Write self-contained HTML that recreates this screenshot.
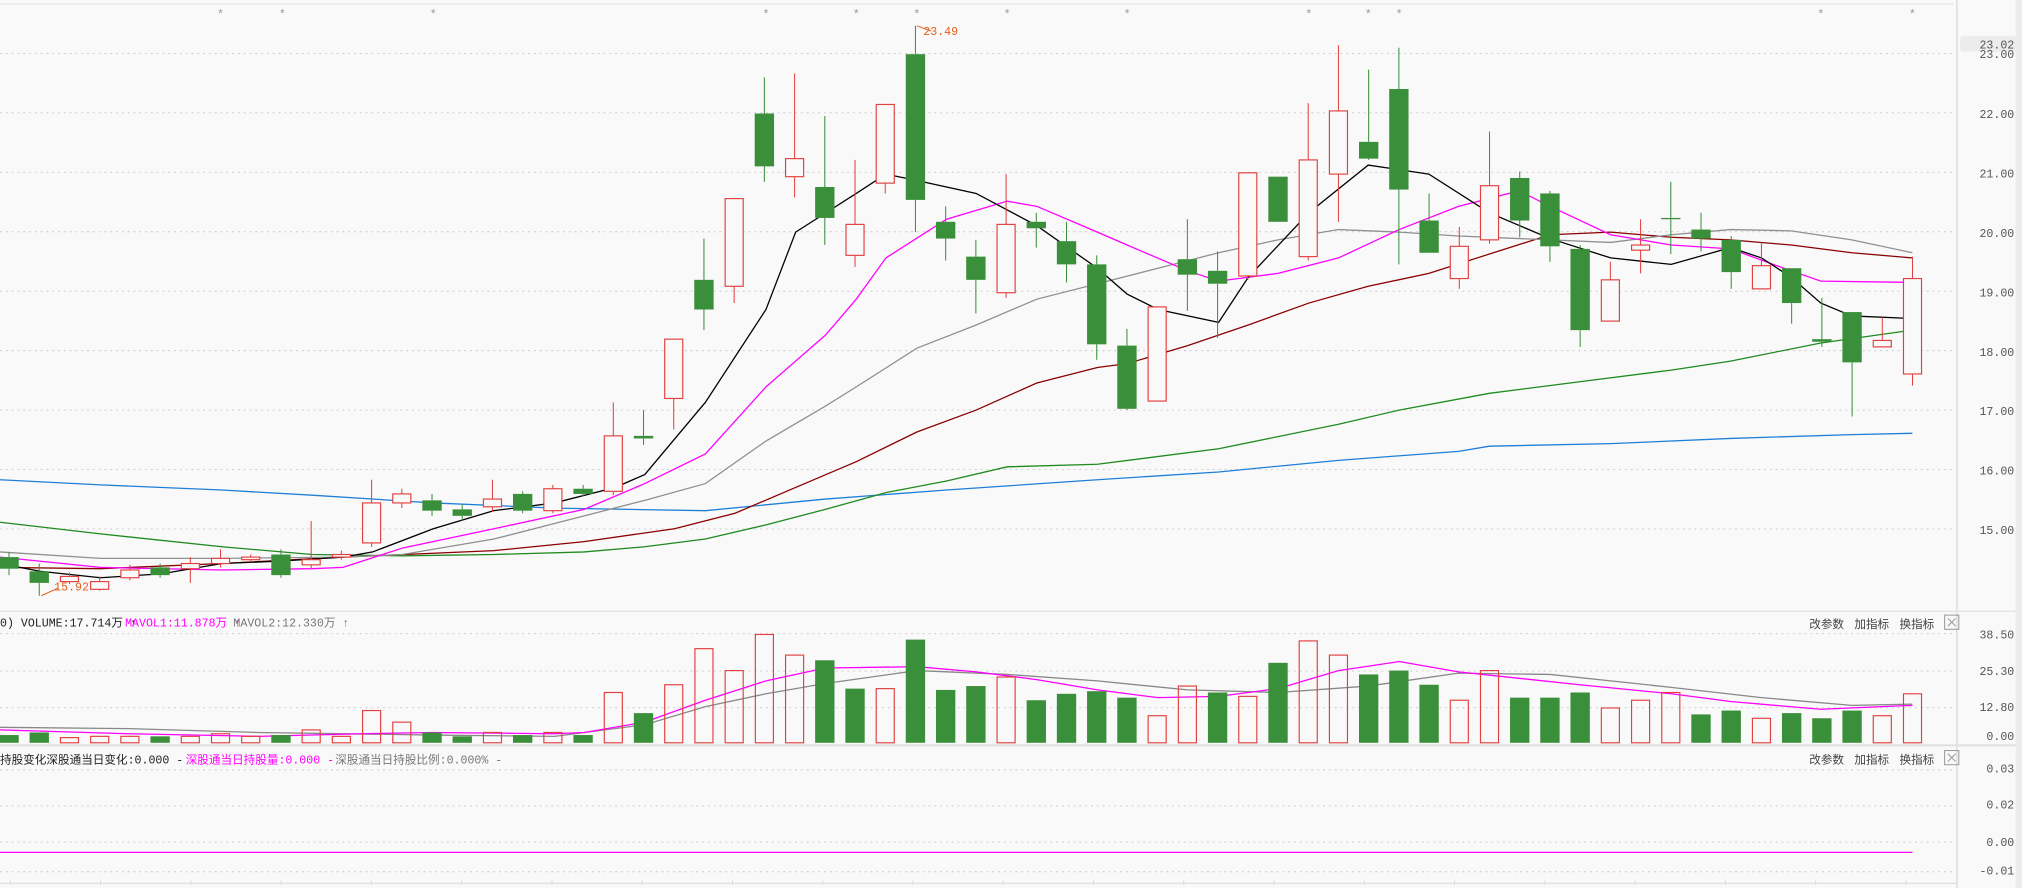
<!DOCTYPE html>
<html><head><meta charset="utf-8">
<style>
html,body{margin:0;padding:0;background:#f9f9f9;overflow:hidden}
svg{display:block}
text{font-family:"Liberation Mono","Noto Sans CJK SC",monospace;font-size:9px}
</style></head><body>
<svg id="s" width="2022" height="888" viewBox="0 0 1568 688.6" xmlns="http://www.w3.org/2000/svg">
<rect x="0" y="0" width="1568" height="689" fill="#f9f9f9"/>
<g id="grid"></g>
<g id="ma"></g>
<g id="cs"></g>
<line x1="0" y1="3" x2="1515" y2="3" stroke="#e6e6e6" stroke-width="1"/>
<line x1="1517.5" y1="0" x2="1517.5" y2="689" stroke="#d8d8d8" stroke-width="1"/>
<line x1="0" y1="474" x2="1568" y2="474" stroke="#e0e0e0" stroke-width="1"/>
<line x1="0" y1="578" x2="1568" y2="578" stroke="#e0e0e0" stroke-width="1.5"/>
<line x1="0" y1="685" x2="1517" y2="685" stroke="#e0e0e0" stroke-width="1"/>
<rect x="1563" y="0" width="5" height="689" fill="#ececec"/>
<g fill="#999" font-size="12" text-anchor="middle">
<text x="171" y="14">*</text><text x="219" y="14">*</text><text x="336" y="14">*</text><text x="594" y="14">*</text><text x="664" y="14">*</text><text x="711" y="14">*</text><text x="781" y="14">*</text><text x="874" y="14">*</text><text x="1015" y="14">*</text><text x="1061" y="14">*</text><text x="1085" y="14">*</text><text x="1412" y="14">*</text><text x="1483" y="14">*</text>
</g>
<rect x="1520" y="28" width="47" height="12" rx="2" fill="#ececec"/>
<g fill="#555" text-anchor="end">
<text x="1562" y="37.5">23.02</text>
<text x="1562" y="45">23.00</text>
<text x="1562" y="91.5">22.00</text>
<text x="1562" y="137.6">21.00</text>
<text x="1562" y="183.7">20.00</text>
<text x="1562" y="229.8">19.00</text>
<text x="1562" y="275.9">18.00</text>
<text x="1562" y="322">17.00</text>
<text x="1562" y="368.1">16.00</text>
<text x="1562" y="414.2">15.00</text>
<text x="1562" y="495">38.50</text>
<text x="1562" y="523.5">25.30</text>
<text x="1562" y="551.5">12.80</text>
<text x="1562" y="574">0.00</text>
<text x="1562" y="599">0.03</text>
<text x="1562" y="627">0.02</text>
<text x="1562" y="656">0.00</text>
<text x="1562" y="678">-0.01</text>
</g>
<text x="716" y="27" fill="#e0601a">23.49</text>
<line x1="711" y1="20" x2="722" y2="24" stroke="#e0601a" stroke-width="0.8"/>
<text x="42" y="458" fill="#e0601a">15.92</text>
<line x1="32" y1="462" x2="45" y2="456" stroke="#e0601a" stroke-width="0.8"/>
<text x="0" y="486" fill="#222">0) VOLUME:17.714万 ↑</text>
<text x="97" y="486" fill="#ff00ff">MAVOL1:11.878万 ↑</text>
<text x="181" y="486" fill="#777">MAVOL2:12.330万 ↑</text>
<g fill="#444" font-size="10">
<text x="1403" y="487">改参数</text><text x="1438" y="487">加指标</text><text x="1473" y="487">换指标</text>
<text x="1403" y="592">改参数</text><text x="1438" y="592">加指标</text><text x="1473" y="592">换指标</text>
</g>
<g stroke="#999" fill="none" stroke-width="0.8">
<rect x="1508" y="477" width="11" height="11"/><path d="M1510.5 479.5l6 6M1516.5 479.5l-6 6"/>
<rect x="1508" y="582" width="11" height="11"/><path d="M1510.5 584.5l6 6M1516.5 584.5l-6 6"/>
</g>
<text x="0" y="592" fill="#222">持股变化</text>
<text x="36" y="592" fill="#222">深股通当日变化:0.000 -</text>
<text x="144" y="592" fill="#ff00ff">深股通当日持股量:0.000 -</text>
<text x="260" y="592" fill="#777">深股通当日持股比例:0.000% -</text>
<line x1="0" y1="661" x2="1483" y2="661" stroke="#ff00ff" stroke-width="1"/>
</svg>
<script>
var NS="http://www.w3.org/2000/svg";
function el(p,t,a){var e=document.createElementNS(NS,t);for(var k in a)e.setAttribute(k,a[k]);document.getElementById(p).appendChild(e);return e;}
var R="#e24040",G="#3a8f3a";
[41.4,87.5,133.6,179.7,225.8,271.9,318,364.1,410.2,491.4,520.4,548.8,597,625,653,676].forEach(function(y){
 el("grid","line",{x1:0,x2:1515,y1:y,y2:y,stroke:"#c8c8c8","stroke-width":0.7,"stroke-dasharray":"1.5,3"});});
for(var i=0;i<22;i++){el("grid","line",{x1:i*70+8,x2:i*70+8,y1:683,y2:686,stroke:"#ccc","stroke-width":0.7});}
var C=[["g",432,441,428,446],["g",443,452,437,462],["r",447,451,444,453],["r",451,457,447,458],["r",442,448,438,450],["g",440,446,437,448],["r",437,441,432,452],["r",433,437,426,440],["r",432,434,430,436],["g",430,446,426,448],["r",434,438,404,441],["r",430,432,427,434],["r",390,421,372,424],["r",383,390,379,394],["g",388,396,383,400],["g",395,400,391,404],["r",387,393,372,397],["g",383,396,381,398],["r",379,396,376,398],["g",379,383,376,385],["r",338,381,312,384],["g",338,340,318,345],["r",263,309,263,333],["g",217,240,185,256],["r",154,222,154,235],["g",88,129,60,141],["r",123,137,57,153],["g",145,169,90,190],["r",174,198,124,207],["r",81,142,81,150],["g",42,155,20,180],["g",172,185,160,202],["g",199,217,186,243],["r",174,227,135,231],["g",172,177,165,192],["g",187,205,172,219],["g",205,267,198,279],["g",268,317,255,318],["r",238,311,238,311],["g",201,213,170,241],["g",210,220,195,262],["r",134,214,134,217],["g",137,172,137,172],["r",124,199,80,202],["r",86,135,35,172],["g",110,123,54,124],["g",69,147,37,205],["g",171,196,150,196],["r",191,216,176,224],["r",144,186,102,189],["g",138,171,133,184],["g",150,191,148,203],["g",193,256,190,269],["r",217,249,203,249],["r",190,194,170,212],["g",169,170,141,197],["g",178,185,165,195],["g",186,211,183,224],["r",206,224,188,224],["g",208,235,208,251],["g",263,265,231,269],["g",242,281,242,323],["r",264,269,246,269],["r",216,290,199,299]];
var V=[["g",570],["g",568],["r",572],["r",571],["r",571],["g",571],["r",571],["r",569],["r",571],["g",570],["r",566],["r",571],["r",551],["r",560],["g",568],["g",571],["r",568],["g",570],["r",568],["g",570],["r",537],["g",553],["r",531],["r",503],["r",520],["r",492],["r",508],["g",512],["g",534],["r",534],["g",496],["g",535],["g",532],["r",525],["g",543],["g",538],["g",536],["g",541],["r",555],["r",532],["g",537],["r",540],["g",514],["r",497],["r",508],["g",523],["g",520],["g",531],["r",543],["r",520],["g",541],["g",541],["g",537],["r",549],["r",543],["r",537],["g",554],["g",551],["r",557],["g",553],["g",557],["g",551],["r",555],["r",538]];
function cx(i){return 7+i*23.43;}
C.forEach(function(c,i){var x=cx(i),col=c[0]=="r"?R:G;
 el("cs","line",{x1:x,x2:x,y1:c[3],y2:c[1],stroke:col,"stroke-width":0.8});
 el("cs","line",{x1:x,x2:x,y1:c[2],y2:c[4],stroke:col,"stroke-width":0.8});
 var h=Math.max(c[2]-c[1],1);
 if(c[0]=="r")el("cs","rect",{x:x-7,y:c[1],width:14,height:h,fill:"#f9f9f9",stroke:R,"stroke-width":0.9});
 else el("cs","rect",{x:x-7.5,y:c[1],width:15,height:h,fill:G});});
V.forEach(function(v,i){var x=cx(i);
 if(v[0]=="r")el("cs","rect",{x:x-7,y:v[1],width:14,height:576-v[1],fill:"none",stroke:R,"stroke-width":0.9});
 else el("cs","rect",{x:x-7.5,y:v[1],width:15,height:576-v[1],fill:G});});
function pl(pts,col,w){el("ma","polyline",{points:pts,fill:"none",stroke:col,"stroke-width":w||1});}
pl("0,372 78,376 172,380 242,384 336,390 430,394 547,396 640,387 734,380 851,372 945,366 1038,357 1131,350 1155,346 1249,344 1342,340 1436,337 1483,336","#1e7fd8");
pl("0,405 78,414 172,424 242,430 312,431 383,430 453,428 500,424 547,418 594,407 640,395 687,382 734,373 781,362 851,360 945,348 1038,329 1085,318 1155,305 1225,296 1296,287 1342,280 1412,266 1483,256","#1f8a1f");
pl("0,440 78,441 172,437 266,432 383,427 453,420 523,410 570,398 617,378 664,358 711,335 757,318 804,297 851,285 874,282 921,268 968,252 1015,235 1061,222 1108,212 1155,197 1202,182 1249,180 1296,184 1342,186 1389,190 1436,196 1483,200","#8b0000");
pl("0,428 78,433 172,433 266,432 312,430 383,418 453,400 500,388 547,375 594,342 640,315 664,300 711,270 757,252 804,232 851,220 898,208 945,196 991,186 1038,178 1085,180 1131,183 1178,185 1249,188 1296,182 1342,178 1389,179 1436,186 1483,196","#909090");
pl("0,432 78,440 172,442 242,441 266,440 312,425 383,410 453,395 500,375 547,352 594,300 640,260 664,232 687,200 734,170 781,156 804,160 851,180 874,190 921,210 945,218 991,212 1038,200 1085,178 1131,160 1178,148 1202,160 1249,182 1296,190 1342,193 1389,210 1412,218 1483,219","#ff00ff");
pl("0,437 31,443 78,448 125,445 172,437 219,435 266,432 289,428 336,410 383,396 430,390 477,378 500,368 547,312 594,240 617,180 664,150 687,135 711,140 757,150 804,175 851,208 874,228 898,240 945,250 968,215 1015,165 1061,128 1108,135 1155,165 1202,185 1249,200 1296,205 1342,192 1366,200 1389,215 1412,235 1436,245 1483,247","#000");
pl("0,564 100,565 200,568 336,570 430,571 500,562 547,548 594,538 640,530 711,520 781,523 851,528 921,535 991,537 1061,532 1131,522 1202,523 1249,528 1296,533 1366,541 1436,547 1483,546","#888");
pl("0,566 100,569 200,571 280,569 336,568 430,569 453,568 500,560 547,543 594,528 640,518 711,517 757,521 804,527 851,535 898,541 945,540 991,534 1038,520 1085,513 1131,521 1178,526 1225,531 1296,538 1342,544 1412,550 1483,547","#ff00ff");
</script>
</body></html>
